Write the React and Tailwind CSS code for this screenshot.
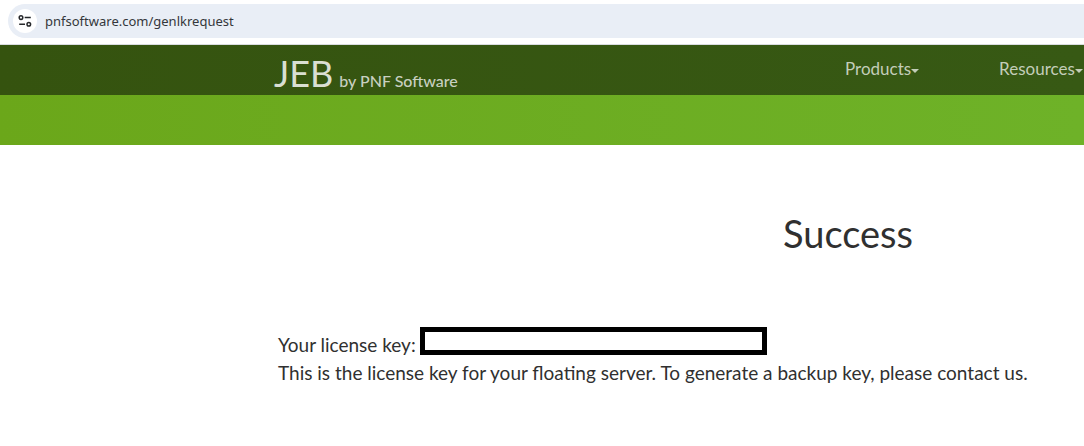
import React from "react";

function Caret() {
  return <span className="mt-1 h-0 w-0 border-x-4 border-t-4 border-x-transparent border-t-[#c3cdb9]" />;
}

function AddressBar() {
  return (
    <div className="border-b border-[#d9dce0] bg-white pt-1 pb-1.5 pl-2">
      <div className="flex h-[34px] items-center gap-2 rounded-l-full bg-[#e9eef6] pl-[5px]">
        <button
          type="button"
          aria-label="View site information"
          className="flex size-6 shrink-0 items-center justify-center rounded-full bg-white"
        >
          <svg width="14" height="14" viewBox="0 0 14 14" fill="none" stroke="#26282b" strokeWidth="1.5">
            <circle cx="3" cy="3.6" r="1.8" />
            <path d="M6.7 3.6H12.8M1.2 10.2H7" />
            <circle cx="10.8" cy="10.2" r="1.8" />
          </svg>
        </button>
        <input
          type="text"
          aria-label="Address"
          defaultValue="pnfsoftware.com/genlkrequest"
          className="min-w-0 flex-1 bg-transparent pt-0.5 font-['Noto_Sans',sans-serif] text-[13px] text-[#34373b] outline-none"
        />
      </div>
    </div>
  );
}

function NavItem({ label }) {
  return (
    <button type="button" className="flex items-center text-[17px] leading-6 text-[#c3cdb9]">
      {label}
      <Caret />
    </button>
  );
}

export default function App() {
  return (
    <div className="overflow-x-hidden bg-white font-['Lato',sans-serif] text-[#303030]">
      <AddressBar />
      <header>
        <nav className="flex h-[50px] bg-linear-to-r from-[#35530f] to-[#375914] pl-[274px]">
          <a href="/" className="flex w-[571px] shrink-0 items-baseline gap-1.5 pt-2">
            <span className="text-4xl text-[#d9dfd2]">JEB</span>
            <span className="text-base font-medium text-[#c8d0c0]">by PNF Software</span>
          </a>
          <div className="flex shrink-0 gap-20 pt-3 pb-3.5">
            <NavItem label="Products" />
            <NavItem label="Resources" />
          </div>
        </nav>
        <div className="h-[50px] bg-linear-to-r from-[#6ba71a] to-[#6eb228]" />
      </header>
      <main className="ml-[278px] w-[1140px] pt-16">
        <h1 className="text-center text-[38px] leading-12 font-normal">Success</h1>
        <div className="pt-[70px] text-[19px] leading-7">
          <div className="flex items-start gap-1">
            <label htmlFor="license" className="pt-1">Your license key:</label>
            <input
              id="license"
              type="text"
              readOnly
              className="h-7 w-[347px] border-5 border-black bg-white px-1 text-xs outline-none"
            />
          </div>
          <p>This is the license key for your floating server. To generate a backup key, please contact us.</p>
        </div>
      </main>
    </div>
  );
}
